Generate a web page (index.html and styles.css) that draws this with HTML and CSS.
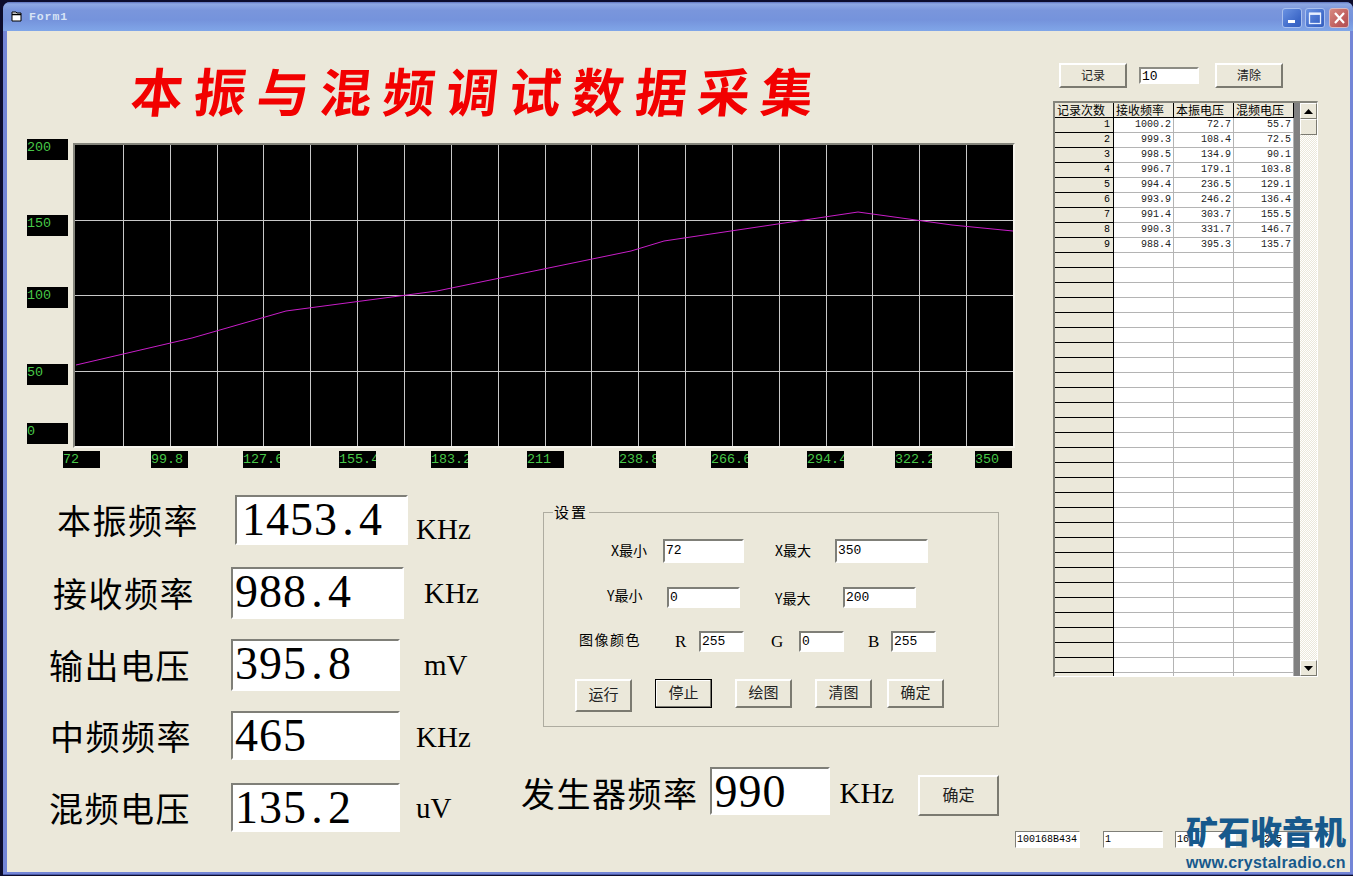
FILE: index.html
```html
<!DOCTYPE html>
<html lang="zh-CN">
<head>
<meta charset="utf-8">
<title>Form1</title>
<link rel="stylesheet" href="styles.css">
</head>
<body>
<div class="window">
  <header class="titlebar">
    <svg class="app-icon" width="11" height="11" viewBox="0 0 11 11"><path d="M1 1h4l1 1h4v8H1z" fill="#fff" stroke="#000" stroke-width="1"/><path d="M1 3.5h9" stroke="#000" stroke-width="1.4"/></svg>
    <span class="caption">Form1</span>
    <div class="caption-btn btn-min"><svg width="19" height="20" viewBox="0 0 19 20"><rect x="5" y="12" width="7" height="3" fill="#fff"/></svg></div>
    <div class="caption-btn btn-max"><svg width="20" height="20" viewBox="0 0 20 20"><rect x="4.5" y="5.5" width="11" height="10" fill="none" stroke="#e8f0ff" stroke-width="1.3"/><rect x="4" y="4.5" width="12" height="2.4" fill="#e8f0ff"/></svg></div>
    <div class="caption-btn btn-close"><svg width="19" height="20" viewBox="0 0 19 20"><path d="M5 5l9 10M14 5l-9 10" stroke="#fff" stroke-width="2.2"/></svg></div>
  </header>
  <div class="client">
    <main class="main">
      <h1 class="title">本振与混频调试数据采集</h1>
      <section class="chart">
        <div class="y-axis">
          <div class="tick">200</div>
          <div class="tick">150</div>
          <div class="tick">100</div>
          <div class="tick">50</div>
          <div class="tick">0</div>
        </div>
        <div class="plot">
          <svg width="938" height="301" viewBox="0 0 938 301">
            <g stroke="#c8c8c8" stroke-width="1" fill="none">
              <path d="M48.5 0V301M95.5 0V301M142.5 0V301M188.5 0V301M235.5 0V301M282.5 0V301M329.5 0V301M376.5 0V301M423.5 0V301M470.5 0V301M516.5 0V301M563.5 0V301M610.5 0V301M657.5 0V301M704.5 0V301M751.5 0V301M797.5 0V301M844.5 0V301M891.5 0V301"/>
              <path d="M0 75.5H938M0 150.5H938M0 226.5H938"/>
            </g>
            <polyline points="1,220 117,193 211,166 362,146 556,106 589,96 783,67 877,80 938,86" fill="none" stroke="#c81ec8" stroke-width="1"/>
          </svg>
        </div>
      </section>
      <div class="x-axis">
        <div class="tick-x">72</div>
        <div class="tick-x">99.8</div>
        <div class="tick-x">127.6</div>
        <div class="tick-x">155.4</div>
        <div class="tick-x">183.2</div>
        <div class="tick-x">211</div>
        <div class="tick-x">238.8</div>
        <div class="tick-x">266.6</div>
        <div class="tick-x">294.4</div>
        <div class="tick-x">322.2</div>
        <div class="tick-x">350</div>
      </div>
      <div class="lower">
        <div class="readouts">
          <div class="readout r1"><span class="big-label">本振频率</span><div class="display">1453<span class="dot">.</span>4</div><span class="unit">KHz</span></div>
          <div class="readout r2"><span class="big-label">接收频率</span><div class="display">988<span class="dot">.</span>4</div><span class="unit">KHz</span></div>
          <div class="readout r3"><span class="big-label">输出电压</span><div class="display">395<span class="dot">.</span>8</div><span class="unit">mV</span></div>
          <div class="readout r4"><span class="big-label">中频频率</span><div class="display">465</div><span class="unit">KHz</span></div>
          <div class="readout r5"><span class="big-label">混频电压</span><div class="display">135<span class="dot">.</span>2</div><span class="unit">uV</span></div>
        </div>
        <div class="controls">
          <fieldset class="settings">
            <legend class="settings-title">设置</legend>
            <div class="set-row sr1"><span class="lbl">X最小</span><div class="tb">72</div><span class="lbl pad31">X最大</span><div class="tb">350</div></div>
            <div class="set-row sr2"><span class="lbl">Y最小</span><div class="tb">0</div><span class="lbl pad35 drop">Y最大</span><div class="tb">200</div></div>
            <div class="set-row sr3"><span class="lbl">图像颜色</span><span class="lbl rgb">R</span><div class="tb">255</div><span class="lbl pad27 rgb">G</span><div class="tb">0</div><span class="lbl pad24 rgb">B</span><div class="tb">255</div></div>
            <div class="set-row sr4">
              <button class="btn tall">运行</button>
              <button class="btn short focus">停止</button>
              <button class="btn short">绘图</button>
              <button class="btn short">清图</button>
              <button class="btn short">确定</button>
            </div>
          </fieldset>
          <div class="generator">
            <span class="gen-label">发生器频率</span>
            <div class="display gen-display">990</div>
            <span class="unit gen-unit">KHz</span>
            <button class="btn gen-btn">确定</button>
          </div>
        </div>
      </div>
    </main>
    <aside class="side">
      <div class="record-bar">
        <button class="btn rec-btn">记录</button>
        <div class="tb rec-tb">10</div>
        <button class="btn rec-btn">清除</button>
      </div>
      <div class="grid-box">
        <table class="grid">
          <colgroup><col class="c1"><col class="c2"><col class="c2"><col class="c2"></colgroup>
          <thead><tr><th>记录次数</th><th>接收频率</th><th>本振电压</th><th>混频电压</th></tr></thead>
          <tbody>
            <tr><th>1</th><td>1000.2</td><td>72.7</td><td>55.7</td></tr>
            <tr><th>2</th><td>999.3</td><td>108.4</td><td>72.5</td></tr>
            <tr><th>3</th><td>998.5</td><td>134.9</td><td>90.1</td></tr>
            <tr><th>4</th><td>996.7</td><td>179.1</td><td>103.8</td></tr>
            <tr><th>5</th><td>994.4</td><td>236.5</td><td>129.1</td></tr>
            <tr><th>6</th><td>993.9</td><td>246.2</td><td>136.4</td></tr>
            <tr><th>7</th><td>991.4</td><td>303.7</td><td>155.5</td></tr>
            <tr><th>8</th><td>990.3</td><td>331.7</td><td>146.7</td></tr>
            <tr><th>9</th><td>988.4</td><td>395.3</td><td>135.7</td></tr>
            <tr><th></th><td></td><td></td><td></td></tr>
            <tr><th></th><td></td><td></td><td></td></tr>
            <tr><th></th><td></td><td></td><td></td></tr>
            <tr><th></th><td></td><td></td><td></td></tr>
            <tr><th></th><td></td><td></td><td></td></tr>
            <tr><th></th><td></td><td></td><td></td></tr>
            <tr><th></th><td></td><td></td><td></td></tr>
            <tr><th></th><td></td><td></td><td></td></tr>
            <tr><th></th><td></td><td></td><td></td></tr>
            <tr><th></th><td></td><td></td><td></td></tr>
            <tr><th></th><td></td><td></td><td></td></tr>
            <tr><th></th><td></td><td></td><td></td></tr>
            <tr><th></th><td></td><td></td><td></td></tr>
            <tr><th></th><td></td><td></td><td></td></tr>
            <tr><th></th><td></td><td></td><td></td></tr>
            <tr><th></th><td></td><td></td><td></td></tr>
            <tr><th></th><td></td><td></td><td></td></tr>
            <tr><th></th><td></td><td></td><td></td></tr>
            <tr><th></th><td></td><td></td><td></td></tr>
            <tr><th></th><td></td><td></td><td></td></tr>
            <tr><th></th><td></td><td></td><td></td></tr>
            <tr><th></th><td></td><td></td><td></td></tr>
            <tr><th></th><td></td><td></td><td></td></tr>
            <tr><th></th><td></td><td></td><td></td></tr>
            <tr><th></th><td></td><td></td><td></td></tr>
            <tr><th></th><td></td><td></td><td></td></tr>
            <tr><th></th><td></td><td></td><td></td></tr>
            <tr><th></th><td></td><td></td><td></td></tr>
            <tr><th></th><td></td><td></td><td></td></tr>
          </tbody>
        </table>
        <div class="grid-gap"></div>
        <div class="scrollbar">
          <div class="sb-btn"><svg width="9" height="5" viewBox="0 0 9 5"><path d="M4.5 0L9 5H0z" fill="#000"/></svg></div>
          <div class="sb-thumb"></div>
          <div class="sb-track"></div>
          <div class="sb-btn"><svg width="9" height="5" viewBox="0 0 9 5"><path d="M4.5 5L9 0H0z" fill="#000"/></svg></div>
        </div>
      </div>
      <div class="status-row">
        <div class="tb mini m1">100168B434</div>
        <div class="tb mini m2">1</div>
        <div class="tb mini m3">16</div>
        <div class="tb mini m4">255</div>
      </div>
    </aside>
    <div class="logo">
      <div class="logo-cn">矿石收音机</div>
      <div class="logo-url">www.crystalradio.cn</div>
    </div>
  </div>
</div>
</body>
</html>
```
FILE: styles.css
```css
* { box-sizing: border-box; }
html, body { margin: 0; padding: 0; }
body {
  width: 1353px;
  height: 876px;
  overflow: hidden;
  background: #0c0c2c;
  font-family: "Noto Sans CJK SC", "Liberation Sans", sans-serif;
  color: #000;
}
.window {
  margin: 2px 0 0 3px;
  width: 1350px;
  height: 873px;
  background: #7385d6;
  border-radius: 7px 7px 0 0;
  box-shadow: inset 0 -1px 0 #4a5aa8;
  overflow: hidden;
}

/* title bar */
.titlebar {
  height: 29px;
  display: flex;
  align-items: center;
  padding-left: 8px;
  background: linear-gradient(#5d72bc 0, #8ea8e2 2px, #7a96dc 8px, #7593dc 18px, #80a6e8 100%);
}
.app-icon { flex: none; }
.caption {
  margin-left: 7px;
  font: bold 11.5px "Liberation Mono", monospace;
  letter-spacing: 0.9px;
  color: #d8e4f6;
  flex: 1;
}
.caption-btn {
  width: 20px;
  height: 20px;
  margin-top: 3px;
  border-radius: 3px;
  border: 1px solid #a9c0ee;
  display: flex;
  align-items: center;
  justify-content: center;
  flex: none;
}
.caption-btn svg { margin: -1px; }
.btn-min, .btn-max { background: linear-gradient(135deg, #6a92e2, #3d68c8 70%, #3660c0); margin-right: 3px; }
.btn-max { margin-right: 4px; }
.btn-close { background: linear-gradient(135deg, #d88a80, #bd5a5a 70%, #b05058); margin-right: 4px; border-color: #d8b8c0; }

/* client */
.client {
  position: relative;
  margin: 0 0 0 4px;
  width: 1343px;
  height: 841px;
  background: #ebe8da;
  display: flex;
  overflow: hidden;
}
.main { width: 1008px; flex: none; }
.title {
  margin: 0 0 0 125px;
  padding: 31px 0 0;
  height: 108px;
  font-size: 52px;
  line-height: 56px;
  font-weight: 700;
  letter-spacing: 11px;
  color: #f20000;
  white-space: nowrap;
  transform-origin: left center;
  transform: skewX(-6deg);
}

/* chart */
.chart {
  margin-left: 20px;
  display: flex;
  align-items: flex-start;
  gap: 5px;
}
.y-axis {
  display: grid;
  width: 41px;
  grid-template-rows: 76px 72px 77px 59px 21px;
}
.tick, .tick-x {
  background: #000;
  color: #48c848;
  font: 13.4px/18px "Liberation Mono", monospace;
  white-space: nowrap;
  overflow: hidden;
}
.tick { height: 21px; width: 41px; }
.plot {
  margin-top: 4px;
  width: 942px;
  height: 305px;
  border: 2px solid;
  border-color: #85857c #f6f4ec #f6f4ec #85857c;
  background: #000;
}
.plot svg { display: block; }
.x-axis {
  margin: 3px 0 0 56px;
  display: grid;
  grid-template-columns: 88px 92px 96px 92px 96px 92px 92px 96px 88px 80px 37px;
}
.tick-x { width: 37px; height: 17px; line-height: 17px; }

/* lower area */
.lower {
  margin-top: 27px;
  display: grid;
  grid-template-columns: 536px 456px;
}
.readout {
  display: flex;
  align-items: center;
}
.big-label {
  font-size: 34px;
  letter-spacing: 1.5px;
  line-height: 40px;
  white-space: nowrap;
}
.display {
  height: 100%;
  border: 2px solid;
  border-color: #7f7f78 #fff #fff #7f7f78;
  background: #fff;
  font: 46px/46px "Liberation Serif", serif;
  letter-spacing: 1px;
  padding-left: 2px;
  flex: none;
  overflow: hidden;
  white-space: nowrap;
}
.dot { display: inline-block; width: 21px; text-align: center; }
.unit {
  font: 29px/36px "Liberation Serif", serif;
  white-space: nowrap;
}
.r1 { height: 50px; padding-left: 50px; }
.r1 .big-label { width: 178px; }
.r1 .display { width: 173px; padding-left: 5px; }
.r1 .unit { margin: 18px 0 0 8px; }
.r2 { height: 52px; margin-top: 22px; padding-left: 46px; }
.r2 .big-label { width: 178px; }
.r2 .display { width: 173px; }
.r2 .unit { margin-left: 20px; }
.r3 { height: 52px; margin-top: 20px; padding-left: 42px; }
.r3 .big-label { width: 182px; }
.r3 .display { width: 169px; }
.r3 .unit { margin-left: 24px; }
.r4 { height: 49px; margin-top: 20px; padding-left: 43px; }
.r4 .big-label { width: 181px; }
.r4 .display { width: 169px; }
.r4 .unit { margin: 2px 0 0 16px; }
.r5 { height: 49px; margin-top: 23px; padding-left: 42px; }
.r5 .big-label { width: 182px; }
.r5 .display { width: 169px; }
.r5 .unit { margin-left: 16px; }

/* settings group */
.controls { padding-top: 8px; }
.settings {
  margin: 0;
  width: 456px;
  height: 224px;
  padding: 18px 0 0;
  border: 1px solid #aeaca0;
  position: relative;
  min-inline-size: 0;
}
.settings-title {
  margin-left: 9px;
  padding: 0 1px;
  font-size: 15px;
  line-height: 18px;
  letter-spacing: 2px;
}
.set-row { display: grid; align-items: center; }
.sr1 {
  height: 24px;
  margin: 0 0 0 67px;
  grid-template-columns: 52px 81px 91px 93px;
}
.sr2 {
  height: 20px;
  margin: 24px 0 0 63px;
  grid-template-columns: 60px 73px 103px 73px;
}
.sr3 {
  height: 20px;
  margin: 24px 0 0 35px;
  grid-template-columns: 96px 24px 45px 55px 45px 47px 45px;
}
.sr4 {
  height: 33px;
  margin: 28px 0 0 31px;
  grid-template-columns: 80px 80px 80px 72px 57px;
  align-items: start;
}
.lbl {
  font-size: 14px;
  line-height: 16px;
  white-space: nowrap;
}
.lbl.rgb { font: 17px/18px "Liberation Serif", serif; }
.pad31 { padding-left: 31px; }
.pad35 { padding-left: 35px; }
.pad27 { padding-left: 27px; }
.pad24 { padding-left: 24px; }
.drop { padding-top: 1px; }
.sr1 .lbl { padding-bottom: 2px; }
.sr3 .lbl:first-child { padding-bottom: 5px; letter-spacing: 1.5px; }
.sr2 .lbl:first-child { padding-bottom: 5px; }
.tb {
  height: 100%;
  border: 2px solid;
  border-color: #7f7f78 #fff #fff #7f7f78;
  background: #fff;
  font: 13px/16px "Liberation Mono", monospace;
  padding-left: 1px;
  display: flex;
  align-items: center;
  white-space: nowrap;
  overflow: hidden;
}
.btn {
  padding: 0 0 3px;
  margin: 0;
  background: #ebe8da;
  border: 2px solid;
  border-color: #fff #7b7a70 #7b7a70 #fff;
  font-family: "Noto Sans CJK SC", sans-serif;
  font-size: 15px;
  line-height: 20px;
  color: #222;
}
.btn.tall { width: 57px; height: 33px; }
.btn.short { width: 57px; height: 29px; }
.btn.focus { border: 1px solid #000; box-shadow: inset -1px -1px 0 #7b7a70, inset 1px 1px 0 #fff; }

/* signal generator */
.generator {
  margin: 40px 0 0 -21px;
  display: flex;
  align-items: flex-start;
  height: 49px;
}
.gen-label {
  width: 190px;
  margin-left: -1px;
  font-size: 34px;
  line-height: 52px;
  letter-spacing: 1.5px;
  white-space: nowrap;
}
.gen-display { width: 120px; height: 48px; margin-left: 0; }
.gen-unit { width: 88px; padding-left: 9px; line-height: 52px; }
.gen-btn { width: 81px; height: 41px; margin-top: 8px; font-size: 16px; }

/* right column */
.side { width: 335px; flex: none; padding-top: 32px; }
.record-bar {
  margin-left: 44px;
  display: flex;
  align-items: center;
  height: 25px;
}
.rec-btn { width: 68px; height: 25px; font-size: 12px; }
.rec-tb {
  width: 60px;
  height: 17px;
  margin: 0 16px 0 12px;
  font-size: 13px;
  padding-top: 2px;
  border-color: #8c8c84 #fff #fff #8c8c84;
}
.grid-box {
  margin: 13px 0 0 38px;
  width: 265px;
  height: 576px;
  border-style: solid;
  border-color: #85857c #fff #fff #85857c;
  border-width: 2px 1px 1px 2px;
  display: flex;
  overflow: hidden;
}
.grid {
  width: 239px;
  table-layout: fixed;
  border-collapse: separate;
  border-spacing: 0;
  flex: none;
  align-self: flex-start;
}
.c1 { width: 59px; }
.c2 { width: 60px; }
.grid th, .grid td {
  height: 15px;
  padding: 0 2px;
  font-weight: 400;
  white-space: nowrap;
  overflow: hidden;
}
.grid th {
  background: #ebe8da;
  border-right: 1px solid #000;
  border-bottom: 1px solid #000;
  font: 10px/14px "Liberation Mono", monospace;
  text-align: right;
  padding-right: 3px;
}
.grid thead th {
  font: 12px/14px "Noto Sans CJK SC", sans-serif;
  text-align: left;
  padding: 0 0 0 2px;
}
.grid td {
  background: #fff;
  border-right: 1px solid #b4b4b4;
  border-bottom: 1px solid #b4b4b4;
  font: 10px/14px "Liberation Mono", monospace;
  color: #222;
  text-align: right;
  padding-right: 2px;
}
.grid-gap { width: 6px; background: #808080; flex: none; }
.scrollbar {
  width: 17px;
  flex: none;
  display: flex;
  flex-direction: column;
  background: repeating-conic-gradient(#fff 0 25%, #ebe8da 0 50%) 0 0 / 2px 2px;
}
.sb-btn, .sb-thumb {
  height: 16px;
  flex: none;
  background: #ebe8da;
  border: 1px solid;
  border-color: #fff #7b7a70 #7b7a70 #fff;
  display: flex;
  align-items: center;
  justify-content: center;
}
.sb-track { flex: 1; }
.status-row {
  margin-top: 154px;
  display: flex;
  align-items: flex-start;
  height: 17px;
}
.mini {
  border-width: 1px;
  font-size: 10px;
  line-height: 15px;
  height: 17px;
}
.m1 { width: 65px; }
.m2 { width: 60px; margin-left: 23px; }
.m3 { width: 61px; margin-left: 12px; }
.m4 { width: 69px; margin-left: 26px; }

/* logo overlay */
.logo {
  position: absolute;
  right: 4px;
  bottom: 0;
  width: 160px;
  color: #17598c;
}
.logo-cn {
  font-size: 32px;
  line-height: 34px;
  font-weight: 900;
  white-space: nowrap;
}
.logo-url {
  margin-top: 7px;
  font: bold 16px/18px "Liberation Sans", sans-serif;
  letter-spacing: 0.25px;
  white-space: nowrap;
}
```
